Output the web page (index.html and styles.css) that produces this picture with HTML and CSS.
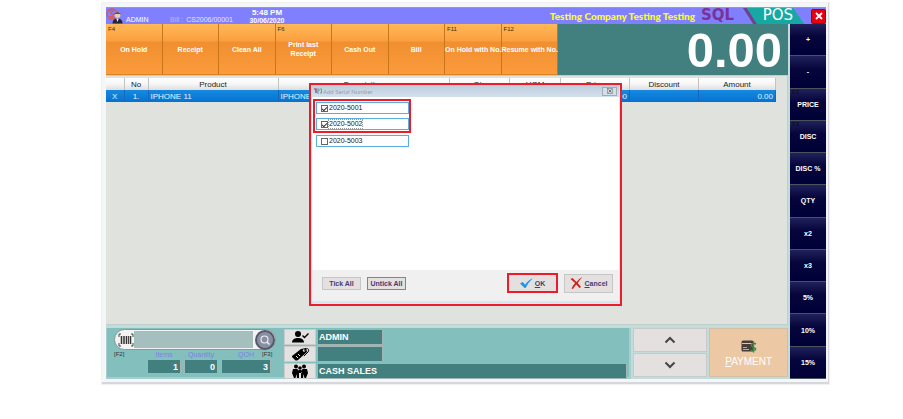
FILE: index.html
```html
<!DOCTYPE html>
<html lang="en">
<head>
<meta charset="utf-8">
<title>SQL POS</title>
<link rel="stylesheet" href="styles.css">
</head>
<body>
<main class="window">
  <header class="titlebar">
    <svg class="user-icon" viewBox="0 0 18 16" aria-hidden="true">
      <circle cx="6" cy="6" r="5" fill="none" stroke="#d9534a" stroke-width="1.3"/>
      <path d="M8 3.6C6.5 2.6 4.2 3 4.4 4.6S8 6 7.6 7.7 5 9 4 8" fill="none" stroke="#d9534a" stroke-width="1.2"/>
      <circle cx="11.5" cy="7" r="3" fill="#f0c9a8"/>
      <path d="M8.2 7C8 3.6 15 3.4 14.8 7L14 5.8H9.4Z" fill="#292638"/>
      <path d="M6.5 15.5C6.5 11.7 9 10.5 11.5 10.5S16.500 11.700 16.500 15.500Z" fill="#292638"/>
      <path d="M10.300 10.500L11.500 14L12.700 10.500Z" fill="#fff"/>
    </svg>
    <span class="user">ADMIN</span>
    <span class="bill"><span class="bill-label">Bill :</span> CS2006/00001</span>
    <div class="clock"><span class="time">5:48 PM</span><span class="date">30/06/2020</span></div>
    <h1 class="company">Testing Company Testing Testing</h1>
    <div class="brand">
      <svg class="brand-shape" viewBox="0 0 70 15" preserveAspectRatio="none" aria-hidden="true">
        <path d="M0 0H54L66 15H11Z" fill="#16a9a4"/>
        <path d="M0 0H4L15 15H11Z" fill="#783d92"/>
      </svg>
      <span class="brand-sql">SQL</span><span class="brand-pos">POS</span>
    </div>
    <button class="close" aria-label="Close">
      <svg viewBox="0 0 8 8" aria-hidden="true"><path d="M1 1L7 7M7 1L1 7" stroke="#fff" stroke-width="1.800"/></svg>
    </button>
  </header>

  <div class="workspace">
    <div class="left">
      <div class="top">
        <nav class="toolbar">
          <button><kbd>F4</kbd>On Hold</button>
          <button>Receipt</button>
          <button>Clean All</button>
          <button><kbd>F6</kbd>Print last<br>Receipt</button>
          <button>Cash Out</button>
          <button>Bill</button>
          <button><kbd>F11</kbd>On Hold with No.</button>
          <button><kbd>F12</kbd>Resume with No.</button>
        </nav>
        <output class="total">0.00</output>
      </div>

      <section class="items">
        <table>
          <colgroup><col class="c-x"><col class="c-no"><col class="c-product"><col class="c-desc"><col class="c-qty"><col class="c-uom"><col class="c-price"><col class="c-price"><col class="c-amount"></colgroup>
          <thead><tr><th></th><th>No</th><th>Product</th><th>Description</th><th>Qty</th><th>UOM</th><th>Price</th><th>Discount</th><th>Amount</th></tr></thead>
          <tbody><tr><td class="mid">X</td><td class="mid">1.</td><td>IPHONE 11</td><td>IPHONE 11</td><td></td><td></td><td class="num">0.00</td><td></td><td class="num">0.00</td></tr></tbody>
        </table>
      </section>

      <footer class="bottom">
        <div class="entry">
          <div class="lookup">
            <div class="search">
              <svg class="barcode" viewBox="0 0 16 14" aria-hidden="true">
                <path d="M3 1H1V4M1 10V13H3M13 1H15V4M15 10V13H13" fill="none" stroke="#444" stroke-width="1"/>
                <path d="M3.500 3V11M6 3V11M8.500 3V11M12.500 3V11" stroke="#333" stroke-width="1.500"/>
                <path d="M10.500 3V11" stroke="#444" stroke-width="1"/>
              </svg>
              <input type="text" aria-label="Barcode">
              <button class="find" aria-label="Search">
                <svg viewBox="0 0 14 14" aria-hidden="true"><circle cx="6.500" cy="6.500" r="3.500" fill="none" stroke="#eef" stroke-width="1.200"/><path d="M9 9L11.500 11.500" stroke="#eef" stroke-width="1.500"/></svg>
              </button>
            </div>
            <div class="counts">
              <span class="hint">[F2]</span>
              <label class="count">Items<input readonly value="1"></label>
              <label class="count">Quantity<input readonly value="0"></label>
              <label class="count wide">QOH<input readonly value="3"></label>
              <span class="hint over">[F3]</span>
            </div>
          </div>
          <div class="parties">
            <button aria-label="Agent"><svg viewBox="0 0 20 14" aria-hidden="true"><circle cx="8" cy="4" r="3"/><path d="M2 12.500C2 9.300 5 8 8 8S14 9.300 14 12.500Z"/><path d="M12.500 5.500L14.500 7.500L18.500 3.500" fill="none" stroke="#000" stroke-width="1.400"/></svg></button>
            <input class="short" readonly value="ADMIN" aria-label="Agent name">
            <button aria-label="Price tag"><svg viewBox="0 0 20 14" aria-hidden="true"><path d="M2 9L11 2L16 1L17 5L8 13Q6 14 5 13L2 10Z"/><circle cx="14" cy="3.500" r="1.200" fill="#e4e1e1"/><path d="M6 9L8 11M8 7L10 9" stroke="#e4e1e1"/><path d="M14 3.500C17 0 20 2 18 5L14 9" fill="none" stroke="#000"/></svg></button>
            <input class="short" readonly value="" aria-label="Price level">
            <button aria-label="Customer"><svg viewBox="0 0 20 14" aria-hidden="true"><circle cx="6" cy="2.500" r="2"/><circle cx="14" cy="2.500" r="2"/><circle cx="10" cy="4" r="1.800"/><path d="M3 5H7.500L9 8V14H7L6.500 10L5.500 14H4L2 9ZM17 5H12.500L11 8V14H13L13.500 10L14.500 14H16L18 9ZM8.500 6H11.500V9H8.500Z"/></svg></button>
            <input readonly value="CASH SALES" aria-label="Customer name">
          </div>
        </div>
        <div class="scroll">
          <button aria-label="Up"><svg viewBox="0 0 12 8" aria-hidden="true"><path d="M1.500 6.500L6 2L10.500 6.500"/></svg></button>
          <button aria-label="Down"><svg viewBox="0 0 12 8" aria-hidden="true"><path d="M1.500 1.500L6 6L10.500 1.500"/></svg></button>
        </div>
        <button class="payment">
          <svg viewBox="0 0 16 13" aria-hidden="true"><rect x=".5" y=".5" width="12" height="11" rx="1.500" fill="#4a3c38"/><path d="M1 3.500H12" stroke="#e8c6a4" stroke-width="1"/><path d="M2 9.500H8M2 7.500H6" stroke="#c8a68b" stroke-width="1"/><path d="M15 4C12 2.500 9.500 4 10.500 6S15.500 7.500 14.500 9.500 11 11 9.500 10M12.500 1.500V12.500" fill="none" stroke="#388b45" stroke-width="1.500"/></svg>
          <span><u>P</u>AYMENT</span>
        </button>
      </footer>
    </div>

    <aside class="keys">
      <button>+</button>
      <button>-</button>
      <button><kbd>F2</kbd>PRICE</button>
      <button><kbd>F3</kbd>DISC</button>
      <button>DISC %</button>
      <button>QTY</button>
      <button>x2</button>
      <button>x3</button>
      <button>5%</button>
      <button>10%</button>
      <button>15%</button>
    </aside>
  </div>

  <section class="dialog" role="dialog" aria-labelledby="dialog-title">
    <div class="dialog-head">
      <svg class="dialog-icon" viewBox="0 0 8 6" aria-hidden="true"><path d="M0 1H2V5" stroke="#9a3840" fill="none" stroke-width="1.200"/><path d="M3 1H5V3H3V5H5" stroke="#5c96c8" fill="none"/><path d="M6 1H7.500V5H6" stroke="#59ad6c" fill="none"/></svg>
      <h2 id="dialog-title">Add Serial Number</h2>
      <button class="dialog-close" aria-label="Close dialog"><svg viewBox="0 0 6 6" aria-hidden="true"><rect x=".5" y=".5" width="5" height="5" fill="none" stroke="#777" stroke-width=".6"/><path d="M1.500 1.500L4.500 4.500M4.500 1.500L1.500 4.500" stroke="#555" stroke-width=".8"/></svg></button>
    </div>
    <div class="dialog-body">
      <div class="picked">
        <label class="serial"><input type="checkbox" checked><span>2020-5001</span></label>
        <label class="serial current"><input type="checkbox" checked><span>2020-5002</span></label>
      </div>
      <label class="serial"><input type="checkbox"><span>2020-5003</span></label>
    </div>
    <div class="dialog-foot">
      <button class="small">Tick All</button>
      <button class="small focus">Untick All</button>
      <button class="big ok"><svg viewBox="0 0 14 11" aria-hidden="true"><path d="M0 6L3 4.500L5.500 7.500Q9 2 14 0Q9 4.500 6 11H5Z" fill="#1d95e6"/></svg><span><u>O</u>K</span></button>
      <button class="big"><svg viewBox="0 0 12 12" aria-hidden="true"><path d="M0 2L2 1L6 5Q8.500 1.500 12 0Q9 3 7.200 6L10.500 10L9 11L5.800 7.500Q3.500 10 2.500 12L1 11.500Q2.500 8.500 4.600 6Z" fill="#cf2118"/></svg><span><u>C</u>ancel</span></button>
    </div>
  </section>
</main>
</body>
</html>
```
FILE: styles.css
```css
* { box-sizing: border-box; }

body {
  margin: 0;
  padding: 3px 74px 32px 102px;
  background: #fff;
  font-family: "Liberation Sans", Arial, sans-serif;
  font-size: 8px;
}

button, input {
  margin: 0;
  padding: 0;
  border: 0;
  border-radius: 0;
  font: inherit;
  color: inherit;
  min-width: 0;
}

h1, h2 { margin: 0; font-weight: normal; }
svg { display: block; }
kbd { font: 6px "Liberation Sans", Arial, sans-serif; }

.window {
  position: relative;
  padding: 4px 2px 3px 4px;
  border: solid #d6d6dc;
  border-width: 0 1px 2px 0;
  background: #f4f7f8;
  box-shadow: 0 0 0 1px #f1f1f3;
}

/* Title bar */
.titlebar {
  display: flex;
  align-items: flex-end;
  height: 17px;
  background: #8080ff;
  color: #fff;
  border-top: 1px solid #8a9fb4;
}
.user-icon { width: 18px; height: 16px; }
.user { margin-left: 2px; width: 44px; font-size: 7px; line-height: 8px; }
.bill { width: 72px; font-size: 7px; line-height: 8px; white-space: nowrap; color: #e3e3ff; }
.bill-label { margin-right: 1px; color: #b9b9f4; }
.clock {
  display: flex;
  flex-direction: column;
  width: 50px;
  text-align: center;
  font-weight: bold;
  line-height: 8px;
}
.date { font-size: 7px; line-height: 7px; }
.company {
  flex: 1;
  align-self: center;
  text-align: right;
  color: #ffff1c;
  font: 900 10px Lato, sans-serif;
  line-height: 14px;
}
.brand {
  position: relative;
  display: flex;
  justify-content: space-between;
  align-self: stretch;
  width: 107px;
  margin-left: 6px;
  padding-right: 15px;
  font: 15px "DejaVu Sans", sans-serif;
  line-height: 15px;
}
.brand-shape { position: absolute; right: 0; top: 0; width: 65px; height: 16px; }
.brand-sql, .brand-pos { position: relative; height: 15px; }
.brand-sql { color: #7b3296; font-weight: bold; }
.close {
  display: grid;
  place-items: center;
  align-self: center;
  width: 15px;
  height: 15px;
  margin-left: 3px;
  border-radius: 2px;
  border: 1px solid #a80010;
  background: #e3000f;
}
.close svg { width: 8px; height: 8px; }

/* Workspace */
.workspace { display: flex; gap: 2px; background: #c2dcda; }
.left { display: flex; flex-direction: column; flex: 1; min-width: 0; }
.top { display: flex; height: 51px; }
.toolbar {
  display: grid;
  grid-template-columns: repeat(8, 1fr);
  flex: 452;
}
.toolbar button {
  position: relative;
  border-right: 1px solid #c9761a;
  border-bottom: 1px solid #d98324;
  background: linear-gradient(#ffb858, #fb9f40 34%, #ef8f30 36%, #fc9b3c);
  color: #fff;
  font-size: 7px;
  font-weight: bold;
  line-height: 9px;
  white-space: nowrap;
}
.toolbar kbd { position: absolute; left: 2px; top: 2px; color: #3c2a10; }
.total {
  flex: 224;
  padding-right: 6px;
  background: #427f7f;
  color: #fff;
  font-size: 49px;
  font-weight: bold;
  line-height: 53px;
  text-align: right;
}

/* Item list */
.items {
  height: 250px;
  padding: 2px 11px 0 0;
  border: solid #c0cfcb;
  border-width: 1px 1px 1px 0;
  background: #dfe2dd;
}
table { width: 100%; table-layout: fixed; border-collapse: collapse; }
.c-x { width: 18px; }
.c-no { width: 24px; }
.c-product { width: 130px; }
.c-qty { width: 60px; }
.c-uom { width: 51px; }
.c-price { width: 69px; }
.c-amount { width: 77px; }
th, td { padding: 0 2px; line-height: 11px; white-space: nowrap; }
th {
  height: 12px;
  border-right: 1px solid #c3c3c3;
  background: linear-gradient(#fff, #f6f6f6 50%, #dedede);
  color: #222;
  font-weight: normal;
}
td {
  height: 12px;
  border-right: 1px solid #1569b8;
  background: linear-gradient(#1689e0, #0672cf);
  color: #e5f3ff;
}
.mid { text-align: center; }
.num { text-align: right; }

/* Bottom panel */
.bottom { display: flex; gap: 2px; padding-top: 3px; height: 54px; }
.entry {
  display: flex;
  flex: 522;
  gap: 8px;
  padding: 1px 2px 2px 7px;
  border: 1px solid #a5cecc;
  border-width: 0 2px 2px 1px;
  background: #82bfbd;
}
.lookup { width: 162px; }
.search {
  display: flex;
  align-items: center;
  height: 21px;
  padding-left: 3px;
  border: 1px solid #8b9696;
  border-radius: 11px;
  background: #f3f3f3;
}
.barcode { width: 16px; height: 14px; }
.search input { flex: 1; height: 17px; background: #a5bfbe; }
.find {
  display: grid;
  place-items: center;
  width: 20px;
  height: 20px;
  margin-left: 2px;
  border: 2px solid #53586a;
  border-radius: 50%;
  background: #898f9f;
}
.find svg { width: 14px; height: 14px; }
.counts { position: relative; display: flex; gap: 3px; padding-right: 5px; }
.hint { width: 30px; color: #333; font-size: 6px; line-height: 8px; }
.over { position: absolute; right: 0; top: 0; width: 14px; }
.count { width: 34px; color: #7d83e8; font-size: 7px; line-height: 9px; text-align: center; }
.count.wide { flex: 1; }
.count input { display: block; width: 100%; height: 15px; padding-right: 2px; text-align: right; }
.count input, .parties input {
  border: 1px solid #a1b5b5;
  background: #427f7f;
  color: #fff;
  font-size: 9px;
  font-weight: bold;
}
.parties {
  display: grid;
  grid-template: repeat(3, 1fr) / 32px 1fr;
  gap: 1px;
  flex: 1;
}
.parties button { display: grid; place-items: center; background: #e4e1e1; border: 1px solid #c8cccc; }
.parties svg { width: 20px; height: 14px; }
.parties input { width: 100%; padding-left: 1px; }
.parties .short { width: 66px; }
.scroll { display: grid; grid-template-rows: 1fr 1fr; gap: 1px; flex: 76; padding-bottom: 2px; }
.scroll button { display: grid; place-items: center; background: #e4e0df; border: 1px solid #c8caca; }
.scroll svg { width: 12px; height: 8px; fill: none; stroke: #454545; stroke-width: 2px; }
.payment {
  display: flex;
  flex-direction: column;
  align-items: center;
  gap: 3px;
  flex: 78;
  margin-bottom: 2px;
  padding-top: 11px;
  border: 1px solid #d3bfa6;
  background: #edc8a5;
  color: #fff;
  font-size: 10px;
  line-height: 12px;
}
.payment svg { width: 16px; height: 13px; }

/* Function keys */
.keys { display: grid; grid-template-rows: repeat(11, 1fr); width: 36px; }
.keys button {
  position: relative;
  border-bottom: 1px solid #48545c;
  background: linear-gradient(#21215c, #06063c 40%, #000038);
  color: #fff;
  font-size: 7px;
  font-weight: bold;
}
.keys kbd { position: absolute; left: 2px; top: 0; color: #080818; }

/* Serial number dialog */
.dialog {
  position: absolute;
  left: 207px;
  top: 80px;
  width: 313px;
  border: 2px solid #ec1c2b;
  background: #d6e6f2;
  padding: 0 1px 3px;
}
.dialog-head {
  display: flex;
  align-items: center;
  height: 12px;
  padding: 0 2px;
  background: linear-gradient(#becddb, #d4e1ed);
}
.dialog-icon { width: 8px; height: 6px; }
.dialog-head h2 { flex: 1; margin-left: 1px; color: #98a0aa; font: 6px Lato, sans-serif; }
.dialog-close {
  display: grid;
  place-items: center;
  width: 15px;
  height: 9px;
  border: 1px solid #a0acba;
  background: #d3dfe9;
}
.dialog-close svg { width: 6px; height: 6px; }
.dialog-body { height: 173px; padding: 2px 1px; background: #fff; }
.picked {
  display: grid;
  gap: 4px;
  width: 98px;
  padding: 1px;
  border: 2px solid #ec1c2b;
  margin-bottom: 2px;
}
.serial {
  display: flex;
  align-items: center;
  gap: 1px;
  width: 93px;
  height: 12px;
  padding-left: 4px;
  border: 1px solid #5aafe0;
  color: #222;
  font-size: 7px;
  line-height: 8px;
}
.dialog-body > .serial { margin-left: 3px; }
.serial input {
  appearance: none;
  display: grid;
  place-items: center;
  width: 7px;
  height: 7px;
  border: 1px solid #666;
}
.serial input:checked::after {
  content: "";
  width: 4px;
  height: 2px;
  border: solid #333;
  border-width: 0 0 1px 1px;
  transform: rotate(-45deg);
}
.current span { outline: 1px dotted #999; }
.dialog-foot {
  display: flex;
  align-items: center;
  gap: 6px;
  height: 31px;
  padding: 0 6px 5px 10px;
  background: #f0f0f0;
}
.dialog-foot button {
  border: 1px solid #c6c6c6;
  background: #e4e0e0;
  color: #473b76;
  font-size: 7px;
  font-weight: bold;
}
.dialog-foot .small { width: 39px; height: 13px; white-space: nowrap; }
.dialog-foot .focus { border: 1px solid #3d97e8; }
.dialog-foot .big { display: flex; align-items: center; justify-content: center; gap: 2px; width: 49px; height: 19px; }
.dialog-foot .ok { width: 51px; height: 20px; margin-left: auto; border: 2px solid #ec1c2b; }
.big svg { width: 13px; height: 12px; }
```
